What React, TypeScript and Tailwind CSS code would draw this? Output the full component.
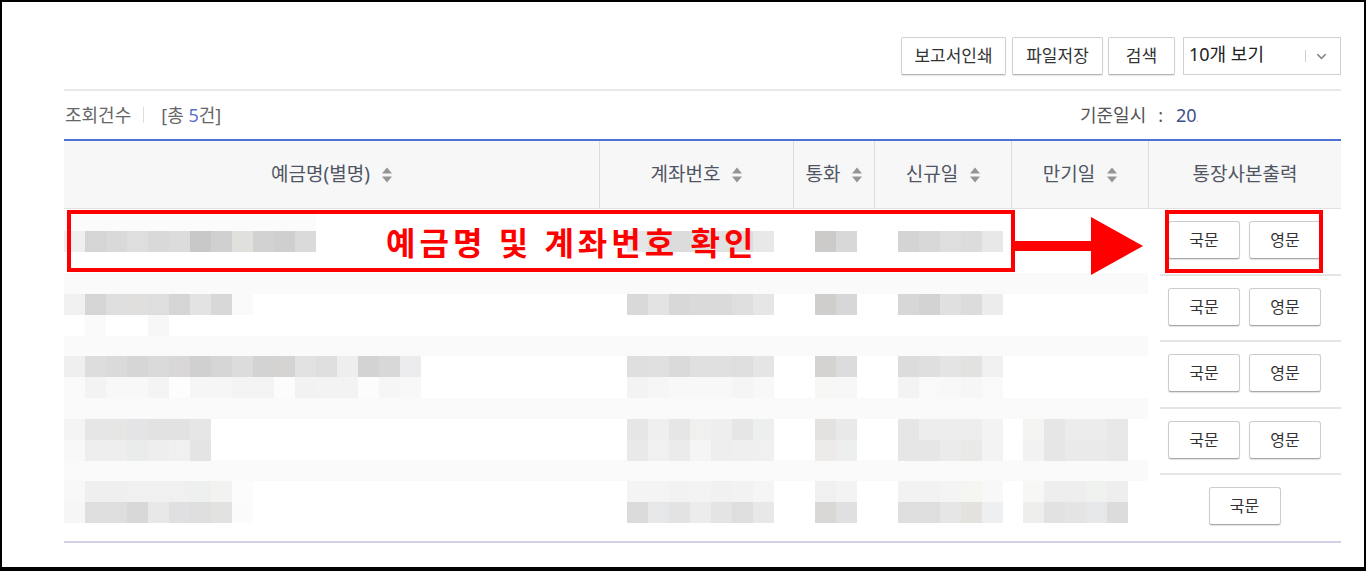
import { ChevronDown } from 'lucide-react'

// pixelated (censored) cells: [x, y, colours], 21px blocks, page coordinates
const strips: [number, number, string[]][] = [
  // row 1
  [64, 231, ['#efefef', '#d5d5d5', '#d9d9d9', '#dedede', '#d9d9d9', '#dcdcdc', '#c9c8c8', '#d0d0d0', '#e0e0dc', '#d2d2d2', '#cfcfcf', '#dadada']],
  [627, 231, ['#e6e6e6', '#e0e0e0', '#dcdcdc', '#dedede', '#e2e2e2', '#dcdcdc', '#e8e8e8']],
  [815, 231, ['#cdcbc9', '#d8d8d8']],
  [898, 231, ['#d4d4d4', '#d8d8d8', '#dedede', '#dcdcdc', '#e8e8e8']],
  // row 2
  [64, 294, ['#f0f0f0', '#d5d5d5', '#dedede', '#e0dfde', '#dedede', '#d5d5d5', '#e3e3e3', '#d8d8d8', '#fafafa']],
  [64, 315, ['', '#fafafa', '', '', '#f7f7f7']],
  [627, 294, ['#d9d9d9', '#e3e3e3', '#d8d8d8', '#dadada', '#dadada', '#dedede', '#e6e6e6']],
  [815, 294, ['#cfcecd', '#d7d7d9']],
  [898, 294, ['#d6d7d6', '#d3d3d3', '#e0e0e0', '#dcdcdc', '#ececec']],
  // row 3
  [64, 356, ['#efefef', '#dcdddc', '#dadada', '#d6d6d6', '#dadada', '#d9d7d7', '#d0d0d0', '#d5d5d5', '#dcdcdc', '#d3d3d3', '#d5d4d3', '#e2e2e2', '#dddedd', '#eeeeee', '#d3d3d3', '#d8d8d8', '#ececee']],
  [64, 377, ['#fafafa', '#f3f3f3', '#f8f8f8', '#f8f8f8', '#f4f4f4', '#fdfdfd', '#f6f6f6', '#f6f6f6', '#f4f4f4', '#f4f4f4', '#fcfcfc', '#f2f2f2', '#f3f3f3', '#f3f3f3', '#fcfcfc', '#f6f6f6', '#f8f8f8']],
  [627, 356, ['#dedede', '#e0e0e0', '#dadada', '#e0e0e0', '#e0e0e0', '#dedede', '#e4e5e4']],
  [627, 377, ['#f2f3f2', '#f6f6f6', '#f8f8f8', '#f8f8f8', '#f8f8f8', '#f5f5f5', '#f8f8f8']],
  [815, 356, ['#d5d3d2', '#dcdcdf']],
  [815, 377, ['#f7f7f5', '#f7f7f7']],
  [898, 356, ['#dcdcdc', '#dfdfdf', '#e4e4e4', '#e2e2e0', '#f0f0f0']],
  [898, 377, ['#f3f3f3', '#f9f9f9', '#f8f8f8', '#f6f6f6', '#f9f9f9']],
  // row 4
  [64, 419, ['#f4f4f4', '#e6e6e6', '#e6e6e4', '#e4e4e6', '#e2e2e2', '#e2e2e2', '#e6e6e6']],
  [64, 440, ['#f8f8f8', '#eeeeee', '#eeeeee', '#eaecec', '#eeeeee', '#f0f0f0', '#e4e4e4']],
  [627, 419, ['#e6e6e6', '#efefef', '#e6e6e6', '#f0f0ee', '#eeeeee', '#e6e6e6', '#edefee']],
  [627, 440, ['#e9e9e9', '#f0f0f0', '#ebebeb', '#f5f5f5', '#eeeeee', '#efefef', '#f0f0f0']],
  [815, 419, ['#e3e2e1', '#e9e9e9']],
  [815, 440, ['#ecebea', '#edefee']],
  [898, 419, ['#e6e6e6', '#ededed', '#ededed', '#ededed', '#f3f3f3']],
  [898, 440, ['#e6e6e6', '#e6e6e6', '#ebebeb', '#e9e9e7', '#f3f3f3']],
  [1023, 419, ['#f4f4f2', '#e6e6e6', '#ececec', '#ececec', '#e8e8e8']],
  [1023, 440, ['#f2f2f2', '#e6e6e6', '#eaeaea', '#eaeaea', '#e8e8e8']],
  // row 5
  [64, 481, ['#f8f8f8', '#efefef', '#efefef', '#f0f0f0', '#f0f0f0', '#f0f0f0', '#eef0ef', '#f2f2f0', '#fcfcfc']],
  [64, 502, ['#f6f6f6', '#dedede', '#dedede', '#d8d8d8', '#e8e8e8', '#e0e0e2', '#dedede', '#e2e2e0', '#fbfbfb']],
  [627, 481, ['#f4f4f4', '#f4f4f4', '#f2f2f2', '#f3f3f3', '#f1f1f1', '#f2f2f2', '#f5f5f5']],
  [627, 502, ['#dcdbdb', '#e6e7e9', '#e3e3e3', '#ececec', '#e4e4e4', '#dedede', '#e8e8e8']],
  [815, 481, ['#f0f0f0', '#f3f3f3']],
  [815, 502, ['#d9d8d6', '#e0e0e2']],
  [898, 481, ['#f2f2f2', '#f2f2f2', '#f4f4f4', '#f5f5f2', '#f8f8f8']],
  [898, 502, ['#dedede', '#dedede', '#e6e6e6', '#e4e2df', '#eeeff1']],
  [1023, 481, ['#f7f7f5', '#eeeeee', '#eeeeee', '#f0f2f0', '#eeeeee']],
  [1023, 502, ['#eeeeec', '#e2e2e2', '#e4e4e4', '#e5e7e9', '#dcdcdc']],
]

const bands: [number, number][] = [
  [273, 21],
  [336, 20],
  [398, 21],
  [460, 21],
]

function SortIcon() {
  return (
    <svg width="10" height="16" viewBox="0 0 10 16" className="ml-3 shrink-0">
      <path d="M0 6.5 L5 0.5 L10 6.5 Z" fill="#959595" />
      <path d="M0 9.5 L5 15.5 L10 9.5 Z" fill="#959595" />
    </svg>
  )
}

function HeadCell({ label, sort = true, first = false }: { label: string; sort?: boolean; first?: boolean }) {
  return (
    <div
      className={`flex items-center justify-center text-[19px] text-[#4f5563] ${first ? '' : 'border-l border-[#dcdcdc]'}`}
    >
      <span>{label}</span>
      {sort && <SortIcon />}
    </div>
  )
}

function CopyButton({ label }: { label: string }) {
  return (
    <button className="w-[72px] h-[38px] bg-white border border-[#cdcdcd] border-b-[#a8a8a8] rounded-[3px] shadow-[0_1px_1px_rgba(0,0,0,0.12)] text-[16px] text-[#333]">
      {label}
    </button>
  )
}

function ToolButton({ label, width }: { label: string; width: string }) {
  return (
    <button
      className={`${width} h-[38px] bg-white border border-[#d0d0d0] border-b-[#b4b4b4] rounded-[2px] shadow-[0_1px_1px_rgba(0,0,0,0.1)] text-[17px] text-[#333]`}
    >
      {label}
    </button>
  )
}

export default function App() {
  const rows = [
    { h: 'h-[65px]', english: true, first: true },
    { h: 'h-[66px]', english: true },
    { h: 'h-[67px]', english: true },
    { h: 'h-[66px]', english: true },
    { h: 'h-[68px]', english: false },
  ]

  return (
    <div className="relative w-[1366px] h-[571px] overflow-hidden bg-white border-t-2 border-l-2 border-r-2 border-b-4 border-black font-['Noto_Sans','Noto_Sans_CJK_KR',sans-serif]">
      <div className="ml-[62px] w-[1277px] pt-[35px]">
        {/* toolbar */}
        <div className="flex justify-end items-center h-[38px]">
          <ToolButton label="보고서인쇄" width="w-[105px]" />
          <div className="ml-[6px]">
            <ToolButton label="파일저장" width="w-[91px]" />
          </div>
          <div className="ml-[5px]">
            <ToolButton label="검색" width="w-[67px]" />
          </div>
          <div className="ml-[8px] w-[158px] h-[38px] border border-[#d0d0d0] bg-white flex items-center">
            <span className="pl-[5px] -mt-[4px] text-[18px] text-[#222] flex-1">10개 보기</span>
            <span className="w-px h-[12px] bg-[#cfcfcf]" />
            <ChevronDown size={15} strokeWidth={2.4} className="ml-[8px] mr-[11px] text-[#8a8a8a]" />
          </div>
        </div>

        <div className="mt-[14px] h-[2px] bg-[#e9e9e9]" />

        {/* count + base date */}
        <div className="h-[48px] flex items-center justify-between text-[18px] text-[#666]">
          <div className="flex items-center pl-px">
            <span>조회건수</span>
            <span className="ml-[12px] w-px h-[16px] bg-[#dddddd]" />
            <span className="ml-[17px]">
              [총 <span className="text-[#5a72c8]">5</span>건]
            </span>
          </div>
          <div className="mr-[143px] w-[118px] overflow-hidden whitespace-nowrap text-[#555]">
            <span>기준일시</span>
            <span className="ml-[12px]">:</span>
            <span className="ml-[13px] text-[#3d4f8a]">2024.12.31 09:00</span>
          </div>
        </div>

        {/* table header */}
        <div className="grid grid-cols-[535px_194px_81px_137px_137px_193px] h-[70px] border-t-2 border-[#4d72d2] border-b border-b-[#e1e1e1] bg-[#f7f7f7]">
          <HeadCell label="예금명(별명)" first />
          <HeadCell label="계좌번호" />
          <HeadCell label="통화" />
          <HeadCell label="신규일" />
          <HeadCell label="만기일" />
          <HeadCell label="통장사본출력" sort={false} />
        </div>

        {/* table body */}
        <div className="flex">
          <svg width="1084" height="332" viewBox="0 0 1084 332" className="shrink-0 block">
            {bands.map(([y, h]) => (
              <rect key={y} x={0} y={y - 209} width={1084} height={h} fill="#fafafa" />
            ))}
            <rect x={0} y={1} width={252} height={21} fill="#fbfbfb" />
            {strips.map(([x, y, colors]) =>
              colors.map((c, i) =>
                c ? <rect key={`${x}-${y}-${i}`} x={x - 64 + i * 21} y={y - 209} width={21} height={21} fill={c} /> : null
              )
            )}
          </svg>
          <div className="w-[193px] flex flex-col">
            {rows.map((r, i) => (
              <div key={i} className={`${r.h} flex flex-col`}>
                {!r.first && <div className="ml-3 h-[2px] bg-[#e6e6e6]" />}
                <div className="pt-3 flex justify-center gap-[9px]">
                  <CopyButton label="국문" />
                  {r.english && <CopyButton label="영문" />}
                </div>
              </div>
            ))}
          </div>
        </div>

        <div className="h-[2px] bg-[#d0d0e6]" />
      </div>

      {/* red annotation */}
      <div className="absolute left-[65px] top-[208px] w-[948px] h-[62px] border-4 border-[#ff0000]" />
      <div className="absolute left-[384px] top-[222px] text-[32px] leading-[38px] font-bold tracking-[4px] text-[#ff0000] whitespace-nowrap">
        예금명 및 계좌번호 확인
      </div>
      <svg width="128" height="58" viewBox="0 0 128 58" className="absolute left-[1013px] top-[215px]">
        <rect x="0" y="24" width="80" height="10" fill="#ff0000" />
        <path d="M76 0 L128 29 L76 58 Z" fill="#ff0000" />
      </svg>
      <div className="absolute left-[1163px] top-[208px] w-[158px] h-[63px] border-4 border-[#ff0000]" />
    </div>
  )
}
